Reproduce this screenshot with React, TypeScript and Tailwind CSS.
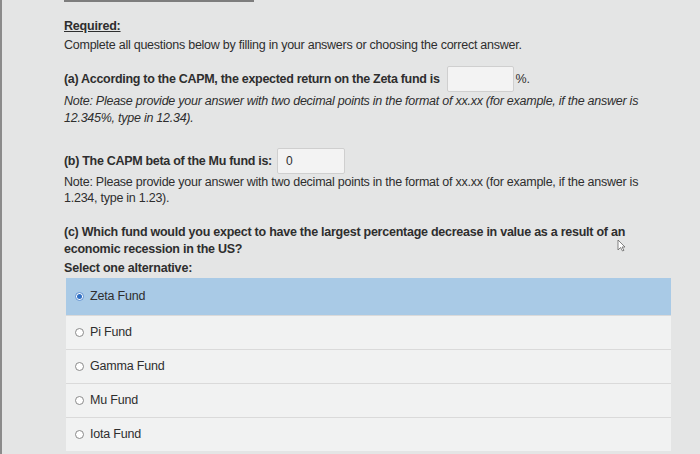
import React from "react";

const Radio = ({ checked }: { checked?: boolean }) => (
  <span
    className={
      "inline-flex items-center justify-center w-[9px] h-[9px] rounded-full border " +
      (checked ? "border-[#5b8fd0] bg-white" : "border-[#8a8a8a] bg-white")
    }
  >
    {checked && <span className="w-[5px] h-[5px] rounded-full bg-[#2f6fc4]" />}
  </span>
);

export default function App() {
  const options = ["Zeta Fund", "Pi Fund", "Gamma Fund", "Mu Fund", "Iota Fund"];
  return (
    <div
      className="w-[700px] h-[454px] overflow-hidden bg-[#e4e5e5] border-l-[2px] border-[#8b8b8b] relative text-[#2e2e2e]"
      style={{ fontFamily: '"Liberation Sans", Arial, sans-serif' }}
    >
      <div className="absolute left-[62px] top-0 w-[190px] h-[2px] bg-[#7d7d7d]" />
      <div className="pl-[62px] pt-[18px]">
        <div className="text-[12.5px] leading-[16px] underline font-semibold tracking-[-0.2px]">Required:</div>
        <div className="text-[12.5px] leading-[16px] mt-[3px] tracking-[-0.25px]">
          Complete all questions below by filling in your answers or choosing the correct answer.
        </div>

        <div className="mt-[13px] flex items-center text-[12.5px] tracking-[-0.3px]">
          <span className="font-bold">(a) According to the CAPM, the expected return on the Zeta fund is</span>
          <span className="ml-[7px] w-[67px] h-[26px] bg-[#f3f3f3] border border-[#cfcfcf] rounded-[2px]" />
          <span className="ml-[2px]">%.</span>
        </div>
        <div className="mt-[1px] text-[12.5px] leading-[17px] italic tracking-[-0.25px] w-[590px]">
          Note: Please provide your answer with two decimal points in the format of xx.xx (for example, if the answer is
          12.345%, type in 12.34).
        </div>

        <div className="mt-[21px] flex items-center text-[12.5px] tracking-[-0.3px]">
          <span className="font-bold">(b) The CAPM beta of the Mu fund is:</span>
          <span className="ml-[5px] w-[68px] h-[26px] bg-[#f3f3f3] border border-[#cfcfcf] rounded-[2px] flex items-center pl-[8px] text-[12px]">
            0
          </span>
        </div>
        <div className="mt-0 text-[12.5px] leading-[16px] tracking-[-0.25px] w-[590px]">
          Note: Please provide your answer with two decimal points in the format of xx.xx (for example, if the answer is
          1.234, type in 1.23).
        </div>

        <div className="mt-[18px] text-[12.5px] leading-[17px] font-bold tracking-[-0.25px] w-[590px]">
          (c) Which fund would you expect to have the largest percentage decrease in value as a result of an economic
          recession in the US?
        </div>
        <div className="text-[12.5px] leading-[17px] font-bold tracking-[-0.2px] mt-[2px]">Select one alternative:</div>
      </div>

      <div className="ml-[64px] mt-[1px] w-[605px] flex flex-col">
        {options.map((o, i) =>
          i === 0 ? (
            <div key={o} className="h-[37px] flex items-center pl-[9px] gap-[6px] text-[12.5px] tracking-[-0.2px] bg-[#a9cae6]">
              <Radio checked />
              <span>{o}</span>
            </div>
          ) : (
            <div
              key={o}
              className="h-[34px] flex items-center pl-[9px] gap-[6px] text-[12.5px] tracking-[-0.2px] bg-[#f1f2f2] border-t border-[#dadada]"
            >
              <Radio />
              <span>{o}</span>
            </div>
          )
        )}
      </div>

      <svg className="absolute left-[615px] top-[239px]" width="9" height="13" viewBox="0 0 9 13">
        <path d="M1 1 L1 11 L3.5 8.5 L5.5 12 L7 11.3 L5 8 L8 8 Z" fill="white" stroke="#666" strokeWidth="0.8" />
      </svg>
    </div>
  );
}
